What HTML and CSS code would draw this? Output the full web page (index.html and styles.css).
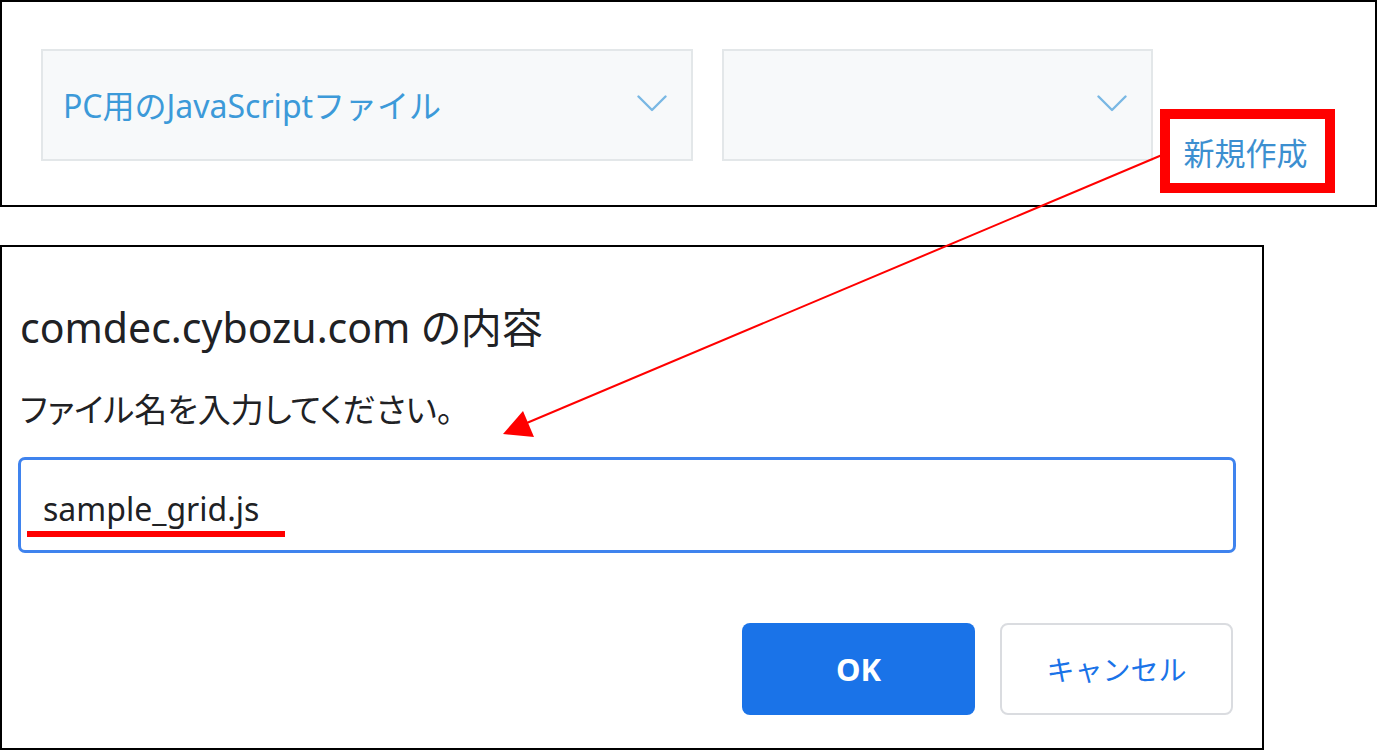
FILE: index.html
```html
<!DOCTYPE html>
<html lang="ja">
<head>
<meta charset="utf-8">
<title>新規作成</title>
<link rel="stylesheet" href="styles.css">
</head>
<body>
<div class="page">
  <section class="toolbar">
    <div class="select select-wide">
      <span class="select-text">PC用のJavaScriptファイル</span>
      <svg class="chevron" viewBox="0 0 30 17" width="30" height="17"><polyline points="1.5,1.5 15,15 28.5,1.5" fill="none" stroke="#7ab8e4" stroke-width="2.4" stroke-linecap="round" stroke-linejoin="round"/></svg>
    </div>
    <div class="select select-narrow">
      <span class="select-text"></span>
      <svg class="chevron" viewBox="0 0 30 17" width="30" height="17"><polyline points="1.5,1.5 15,15 28.5,1.5" fill="none" stroke="#7ab8e4" stroke-width="2.4" stroke-linecap="round" stroke-linejoin="round"/></svg>
    </div>
    <div class="highlight">
      <a class="new-link">新規作成</a>
    </div>
  </section>

  <section class="dialog">
    <h1 class="dialog-title">comdec.cybozu.com の内容</h1>
    <p class="dialog-message">ファイル名を入力してください。</p>
    <div class="dialog-input">
      <span class="input-value">sample_grid.js</span>
      <span class="underline"></span>
    </div>
    <div class="dialog-buttons">
      <button class="btn btn-ok">OK</button>
      <button class="btn btn-cancel">キャンセル</button>
    </div>
  </section>

  <svg class="annotation" width="1377" height="750" viewBox="0 0 1377 750">
    <line x1="1162" y1="155" x2="522" y2="425" stroke="#ff0000" stroke-width="2"/>
    <polygon points="503,434 523,411 534,437" fill="#ff0000"/>
  </svg>
</div>
</body>
</html>
```

FILE: styles.css
```css
* { box-sizing: border-box; }

html, body {
  margin: 0;
  padding: 0;
  background: #ffffff;
}

body {
  font-family: "Noto Sans", "Noto Sans CJK JP", sans-serif;
  font-feature-settings: "palt";
  width: 1377px;
  height: 750px;
  overflow: hidden;
}

.page {
  position: relative;
  width: 1377px;
  height: 750px;
}

/* ---------- top toolbar ---------- */
.toolbar {
  width: 1377px;
  height: 207px;
  border: 2px solid #000;
  display: flex;
  align-items: flex-start;
  padding: 47px 0 0 39px;
}

.select {
  height: 112px;
  background: #f7f9fa;
  border: 2px solid #e3e7e9;
  display: flex;
  align-items: center;
  justify-content: space-between;
  padding: 0 24px 0 20px;
}

.select-wide { width: 652px; }
.select-narrow { width: 431px; margin-left: 29px; }

.select-text {
  color: #3c9ad9;
  font-size: 32px;
  font-feature-settings: normal;
  margin-top: -3px;
}

.chevron {
  display: block;
  margin-top: -4px;
}

.highlight {
  margin-left: 7px;
  margin-top: 60px;
  width: 175px;
  height: 84px;
  border: 10px solid #ff0000;
  display: flex;
  align-items: center;
  justify-content: center;
  padding-right: 4px;
}

.new-link {
  color: #3c8fd0;
  font-size: 31px;
}

/* ---------- dialog ---------- */
.dialog {
  width: 1264px;
  height: 505px;
  margin-top: 38px;
  border: 2px solid #000;
  padding: 60px 26px 0 16px;
}

.dialog-title {
  margin: 0 0 0 2px;
  font-weight: normal;
  font-size: 41px;
  line-height: 40px;
  color: #202124;
}

.dialog-message {
  margin: 43px 0 0 2px;
  font-size: 33px;
  line-height: 40px;
  color: #202124;
}

.dialog-input {
  position: relative;
  margin-top: 27px;
  height: 96px;
  border: 3px solid #3f83ee;
  border-radius: 7px;
  display: flex;
  align-items: center;
  padding: 6px 0 0 22px;
}

.input-value {
  font-size: 32px;
  color: #202124;
}

.underline {
  position: absolute;
  left: 6px;
  top: 71px;
  width: 258px;
  height: 6px;
  background: #ff0000;
}

.dialog-buttons {
  margin-top: 70px;
  display: flex;
  justify-content: flex-end;
  gap: 25px;
  padding-right: 3px;
}

.btn {
  width: 233px;
  height: 92px;
  border-radius: 8px;
  font-family: inherit;
  cursor: pointer;
}

.btn-ok {
  background: #1a73e8;
  border: none;
  color: #fff;
  font-weight: bold;
  font-size: 31px;
}

.btn-cancel {
  background: #fff;
  border: 2px solid #dadce0;
  color: #1a73e8;
  font-size: 28px;
}

/* ---------- annotation arrow ---------- */
.annotation {
  position: absolute;
  left: 0;
  top: 0;
  pointer-events: none;
}
```
